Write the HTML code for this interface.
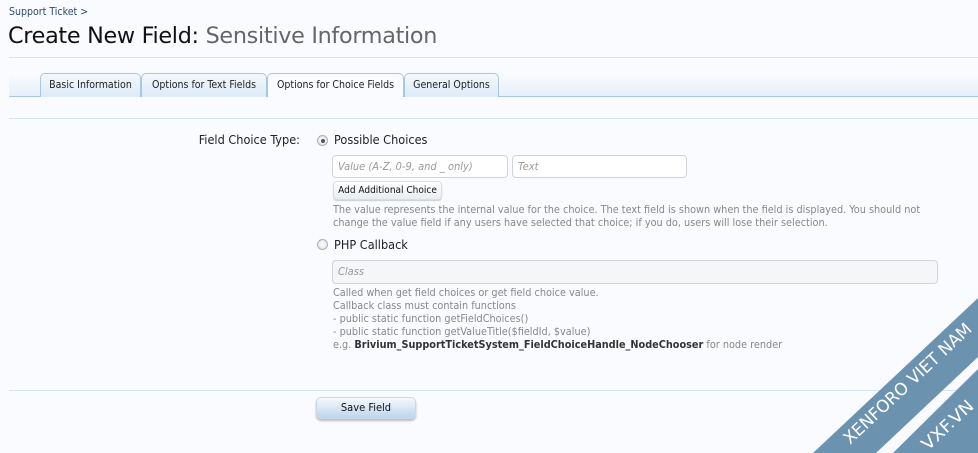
<!DOCTYPE html>
<html><head><meta charset="utf-8">
<style>
*{box-sizing:border-box;margin:0;padding:0}
body{width:978px;height:453px;overflow:hidden;background:#fafbfe;font-family:"DejaVu Sans Condensed","Liberation Sans",sans-serif;font-size:11px;color:#000;position:relative}
.a{position:absolute}
.crumb{left:9px;top:6px;color:#2b4a6b;font-size:10.5px}
h1{position:absolute;left:8px;top:23px;font-weight:normal;font-size:22.3px;color:#111;white-space:nowrap;font-family:"DejaVu Sans","Liberation Sans",sans-serif;letter-spacing:-0.3px}
h1 span{color:#666}
.hr{height:1px;background:#d7e4f0}
.strip{left:9px;top:73px;width:969px;height:24px;background:linear-gradient(#fafbfe,#e6f0fa);border-bottom:1px solid #a9c7e2}
.tab{position:absolute;top:73px;height:24px;border:1px solid #a9c7e2;border-bottom:none;border-radius:5px 5px 0 0;background:linear-gradient(#f4f8fc,#dceaf7);text-align:center;line-height:23px;font-size:10.5px;color:#222}
.tab.on{background:#fafbfe;height:24px;z-index:2}
.lbl{right:678px;top:132px;font-size:12.6px;color:#222}
.radio{width:11px;height:11px;border-radius:50%;border:1px solid #b0b0b0;background:radial-gradient(#fff,#ddd)}
.radio.on::after{content:"";position:absolute;left:2.5px;top:2.5px;width:4px;height:4px;border-radius:50%;background:#555}
.rl{font-size:12.6px;color:#222}
.inp{border:1px solid #cfd4d8;border-radius:4px;background:#fff;color:#999;font-style:italic;padding-left:5px;line-height:21px;font-size:11px}
.btn{border:1px solid #d7dde3;border-radius:4px;background:linear-gradient(#fff,#e8edf2);font-size:10px;line-height:17px;text-align:center;color:#111;box-shadow:0 1px 1px #ccc}
.ex{color:#888;font-size:10.8px;line-height:13px}
.ex b{color:#333;font-weight:bold}
.save{left:316px;top:397px;width:100px;height:22px;border-radius:5px;background:linear-gradient(#f5f9fd,#bcd5ec);border:1px solid #c8d9e8;box-shadow:0 2px 2px #bbb;text-align:center;line-height:20px;font-size:11px;color:#111}
</style></head><body>
<div class="a crumb">Support Ticket &gt;</div>
<h1>Create New Field: <span>Sensitive Information</span></h1>
<div class="a hr" style="left:9px;top:57px;width:969px"></div>
<div class="a strip"></div>
<div class="tab" style="left:40px;width:101px">Basic Information</div>
<div class="tab" style="left:141px;width:126px">Options for Text Fields</div>
<div class="tab on" style="left:267px;width:137px">Options for Choice Fields</div>
<div class="tab" style="left:404px;width:95px">General Options</div>
<div class="a hr" style="left:9px;top:118px;width:969px"></div>

<div class="a lbl">Field Choice Type:</div>
<div class="a radio on" style="left:317px;top:135px"></div>
<div class="a rl" style="left:334px;top:132px">Possible Choices</div>
<div class="a inp" style="left:332px;top:155px;width:176px;height:23px">Value (A-Z, 0-9, and _ only)</div>
<div class="a inp" style="left:512px;top:155px;width:175px;height:23px">Text</div>
<div class="a btn" style="left:333px;top:181px;width:109px;height:19px">Add Additional Choice</div>
<div class="a ex" style="left:333px;top:203px;width:600px">The value represents the internal value for the choice. The text field is shown when the field is displayed. You should not change the value field if any users have selected that choice; if you do, users will lose their selection.</div>
<div class="a radio" style="left:317px;top:239px"></div>
<div class="a rl" style="left:334px;top:237px">PHP Callback</div>
<div class="a inp" style="left:332px;top:260px;width:606px;height:24px;background:#f5f6f7">Class</div>
<div class="a ex" style="left:333px;top:286px;width:600px">Called when get field choices or get field choice value.<br>Callback class must contain functions<br>- public static function getFieldChoices()<br>- public static function getValueTitle($fieldId, $value)<br>e.g. <b>Brivium_SupportTicketSystem_FieldChoiceHandle_NodeChooser</b> for node render</div>
<div class="a hr" style="left:9px;top:390px;width:969px"></div>
<div class="a save">Save Field</div>

<svg class="a" style="left:0;top:0" width="978" height="453">
<polygon points="813,453 978,298 978,357 876,453" fill="#6b93b0"/>
<polygon points="893,453 978,369 978,453" fill="#6b93b0"/>
<text x="0" y="0" transform="translate(850,445) rotate(-43)" fill="#fff" font-family="DejaVu Sans Condensed,Liberation Sans,sans-serif" font-size="17" textLength="168" lengthAdjust="spacingAndGlyphs">XENFORO VIET NAM</text>
<text x="0" y="0" transform="translate(928,451) rotate(-43)" fill="#fff" font-family="DejaVu Sans Condensed,Liberation Sans,sans-serif" font-size="17" textLength="64" lengthAdjust="spacingAndGlyphs">VXF.VN</text>
</svg>
</body></html>
